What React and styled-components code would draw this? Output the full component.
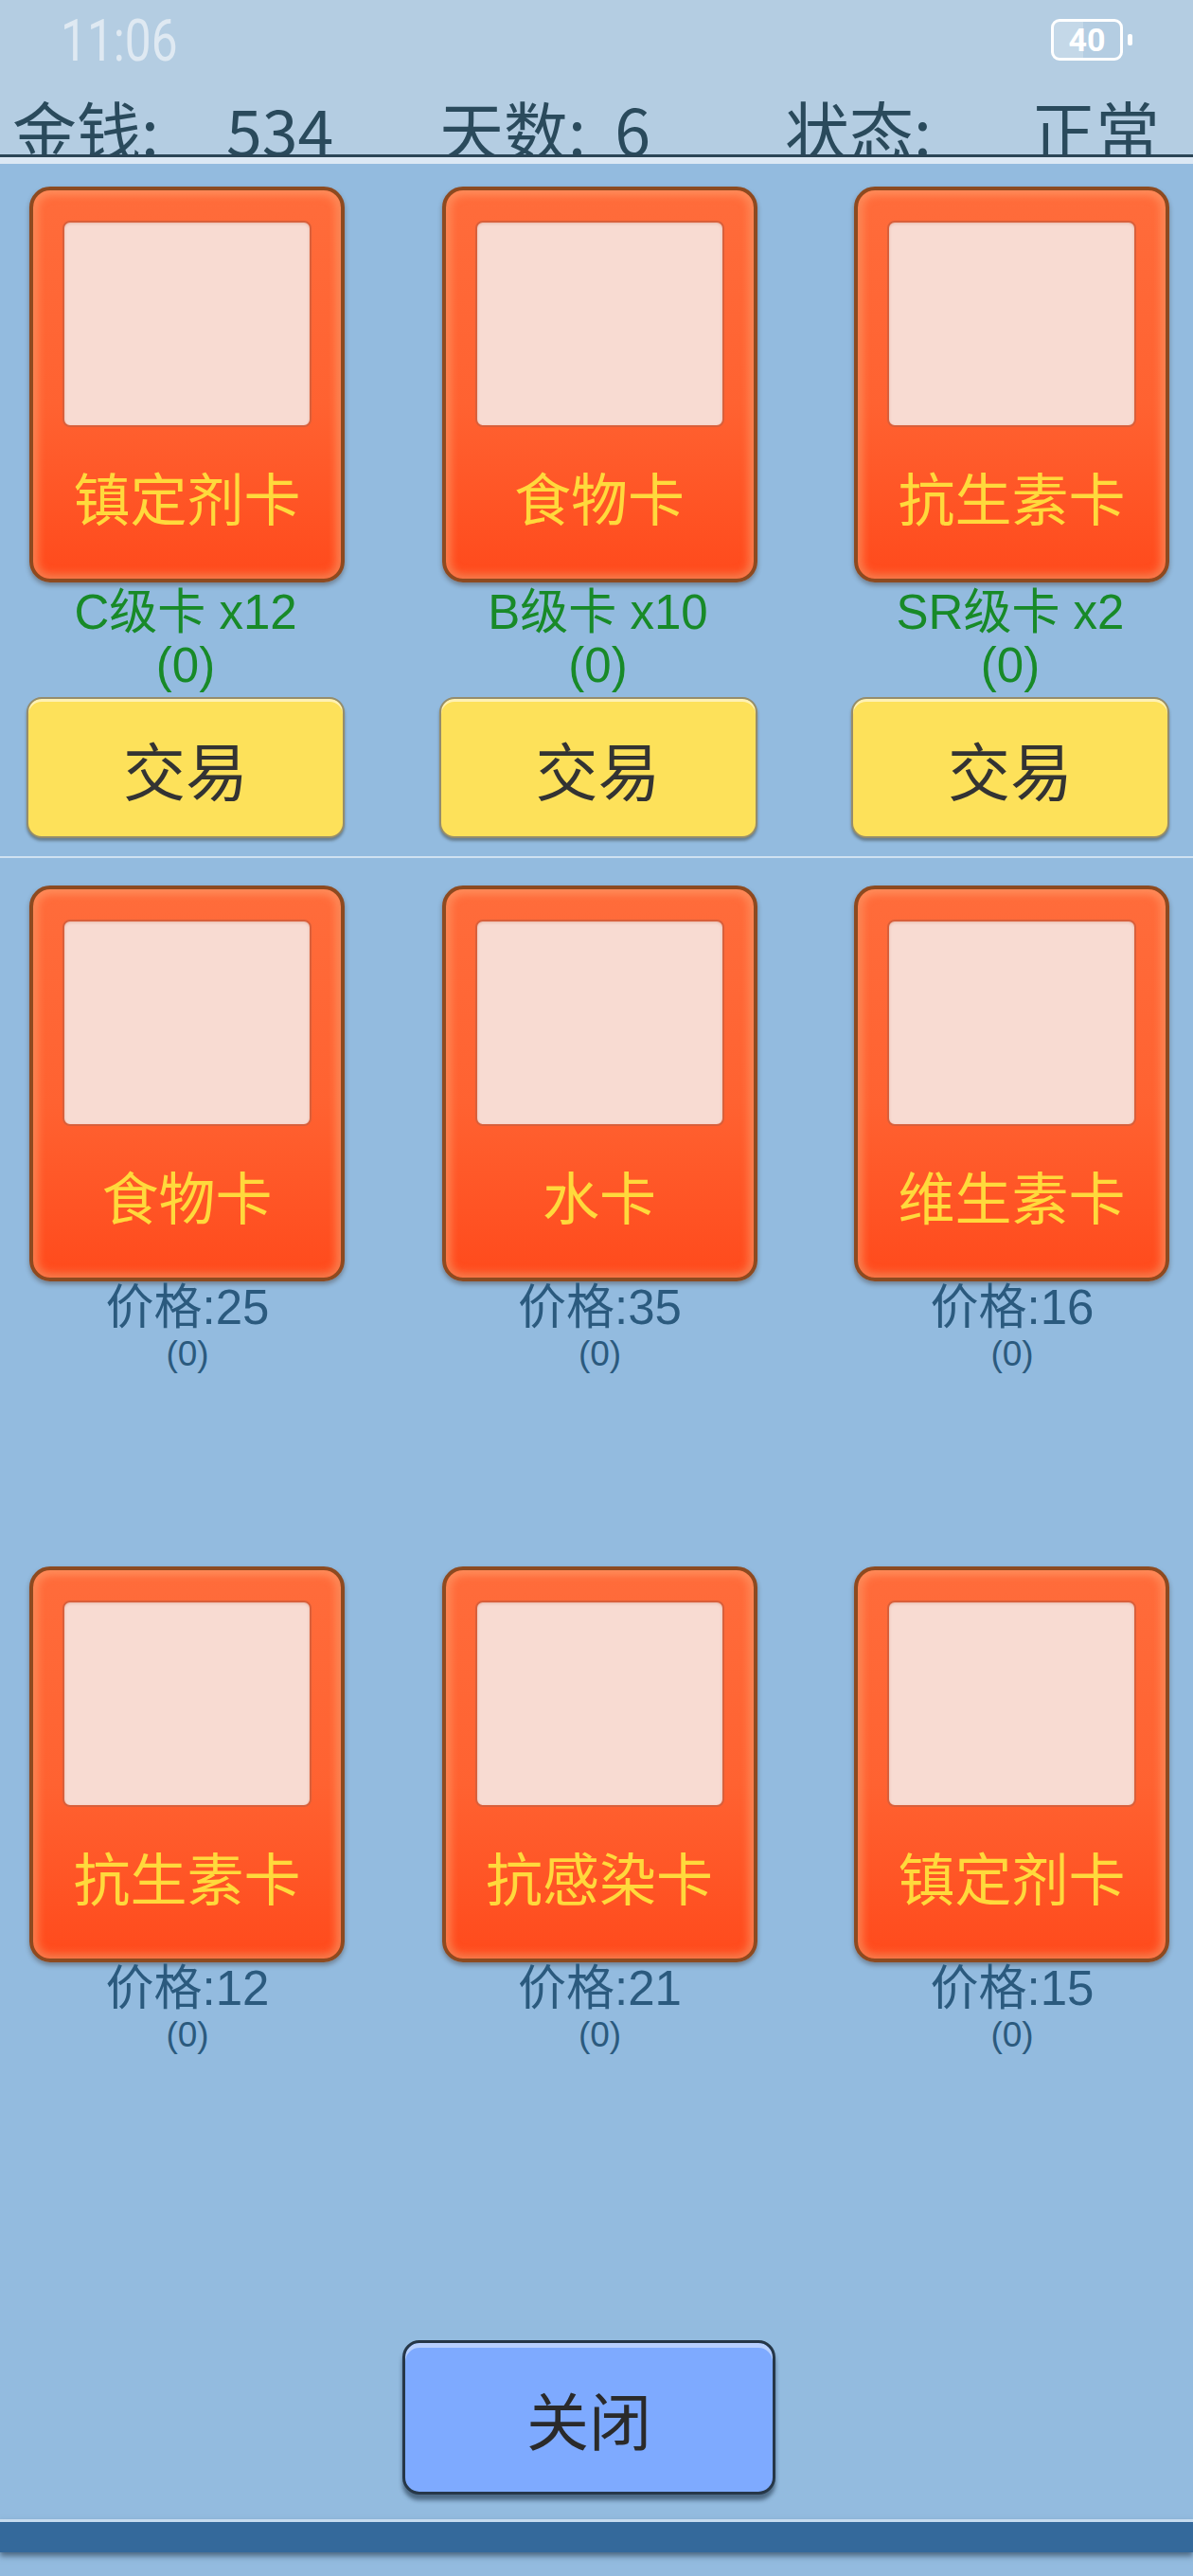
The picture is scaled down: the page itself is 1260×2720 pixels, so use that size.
import React from 'react'
import styled, { createGlobalStyle } from 'styled-components'

const GlobalStyle = createGlobalStyle`
  html, body {
    margin: 0;
    padding: 0;
    background: #e9f0f6;
  }
  body {
    font-family: "Liberation Sans", "Noto Sans CJK SC", sans-serif;
  }
`;

const tradeCards = [
    { name: '镇定剂卡', grade: 'C级卡 x12', owned: 0 },
    { name: '食物卡', grade: 'B级卡 x10', owned: 0 },
    { name: '抗生素卡', grade: 'SR级卡 x2', owned: 0 },
];

const shopCards = [
    { name: '食物卡', price: 25, owned: 0 },
    { name: '水卡', price: 35, owned: 0 },
    { name: '维生素卡', price: 16, owned: 0 },
    { name: '抗生素卡', price: 12, owned: 0 },
    { name: '抗感染卡', price: 21, owned: 0 },
    { name: '镇定剂卡', price: 15, owned: 0 },
];

function Card({ name }) {
    return (
        <CardFrame>
            <CardPicture />
            <CardName>{name}</CardName>
        </CardFrame>
    );
}

function App() {
    return (
        <Page>
            <GlobalStyle />
            <Top>
                <StatusBar>
                    <Clock>11:06</Clock>
                    <BatteryWrap>
                        <Battery>40</Battery>
                        <BatteryNub />
                    </BatteryWrap>
                </StatusBar>
                <Stats>
                    <span>金钱:</span>
                    <span>534</span>
                    <span>天数:  6</span>
                    <span>状态:</span>
                    <span>正常</span>
                </Stats>
            </Top>

            <TradeGrid>
                {tradeCards.map((card) => (
                    <Column key={card.name}>
                        <Card name={card.name} />
                        <Grade>
                            {card.grade}
                            <br />
                            ({card.owned})
                        </Grade>
                        <TradeButton>交易</TradeButton>
                    </Column>
                ))}
            </TradeGrid>

            <Divider />

            <ShopGrid>
                {shopCards.map((card, i) => (
                    <Column key={i}>
                        <Card name={card.name} />
                        <Price>价格:{card.price}</Price>
                        <Owned>({card.owned})</Owned>
                    </Column>
                ))}
            </ShopGrid>

            <CloseButton>关闭</CloseButton>
            <BottomBar />
        </Page>
    );
}

const Page = styled.div`
    width: 1260px;
    height: 2720px;
    background: #93bbdf;
    display: flex;
    flex-direction: column;
    overflow: hidden;
`;

const Top = styled.div`
    background: #b4cde2;
    border-bottom: 7px solid #dce8f4;
`;

const StatusBar = styled.div`
    height: 90px;
    display: flex;
    align-items: flex-start;
    justify-content: space-between;
    padding: 0 64px 0 64px;
`;

const Clock = styled.div`
    font-family: Roboto, "Liberation Sans", sans-serif;
    font-size: 62px;
    line-height: 86px;
    color: #dfe9f2;
    transform: scaleX(0.8);
    transform-origin: left center;
`;

const BatteryWrap = styled.div`
    display: flex;
    align-items: center;
    gap: 5px;
    margin-top: 20px;
`;

const Battery = styled.div`
    width: 70px;
    height: 38px;
    border: 3px solid #fff;
    border-radius: 9px;
    background: linear-gradient(to right, rgba(255, 255, 255, 0.22) 45%, transparent 45%);
    color: #fff;
    font-family: Roboto, "Liberation Sans", sans-serif;
    font-weight: 700;
    font-size: 34px;
    line-height: 38px;
    text-align: center;
`;

const BatteryNub = styled.div`
    width: 5px;
    height: 12px;
    border-radius: 2px;
    background: #fff;
`;

const Stats = styled.div`
    height: 73px;
    overflow: hidden;
    display: grid;
    grid-template-columns: 226px 225px 365px 260px auto;
    padding-left: 13px;
    border-bottom: 3px solid #2b4556;
    font-family: "Noto Sans CJK SC", sans-serif;
    font-size: 68px;
    line-height: 68px;
    color: #2a4a5c;
    white-space: pre;

    span {
        padding-top: 12px;
    }
`;

const TradeGrid = styled.div`
    display: grid;
    grid-template-columns: repeat(3, 336px);
    column-gap: 99.5px;
    padding: 24px 0 0 28px;
`;

const ShopGrid = styled(TradeGrid)`
    padding-top: 29px;
    grid-auto-rows: 719px;
`;

const Column = styled.div`
    display: flex;
    flex-direction: column;
    align-items: stretch;
`;

const CardFrame = styled.div`
    box-sizing: border-box;
    width: 333px;
    height: 418px;
    margin-left: 3px;
    padding: 32px 31px 0;
    border: 4px solid #8d4a20;
    border-radius: 22px;
    background: linear-gradient(#ff6c3b, #ff6231 55%, #ff4a1c);
    box-shadow:
        inset 0 0 8px 5px rgba(255, 165, 115, 0.6),
        inset 0 -4px 6px rgba(200, 50, 10, 0.35),
        0 3px 5px rgba(60, 40, 30, 0.4);
    display: flex;
    flex-direction: column;
`;

const CardPicture = styled.div`
    height: 218px;
    border: 2px solid #d95f3a;
    border-radius: 8px;
    background: #f8dbd2;
    box-sizing: border-box;
    box-shadow: inset 0 1px 3px rgba(180, 80, 50, 0.25);
`;

const CardName = styled.div`
    flex: 1;
    display: flex;
    align-items: center;
    justify-content: center;
    padding-bottom: 16px;
    font-family: "Noto Sans CJK SC", sans-serif;
    font-size: 60px;
    color: #ffd93c;
    white-space: nowrap;
`;

const Grade = styled.div`
    margin-top: 4px;
    font-size: 51px;
    line-height: 56px;
    color: #188a28;
    text-align: center;
`;

const TradeButton = styled.button`
    margin-top: 5px;
    height: 149px;
    border: 2px solid #958d6c;
    border-radius: 16px;
    background: #fde15a;
    box-shadow:
        inset 0 3px 0 rgba(255, 255, 255, 0.55),
        0 3px 3px rgba(40, 40, 30, 0.4);
    font-family: "Noto Sans CJK SC", sans-serif;
    font-size: 66px;
    color: #333;
    padding: 0;
`;

const Divider = styled.div`
    height: 2px;
    margin-top: 19px;
    background: #cfe1f1;
`;

const Price = styled.div`
    font-size: 51px;
    line-height: 56px;
    color: #2b5a7e;
    text-align: center;
    padding-left: 4px;
`;

const Owned = styled.div`
    font-size: 37px;
    line-height: 42px;
    color: #2b5a7e;
    text-align: center;
    padding-left: 4px;
`;

const CloseButton = styled.button`
    align-self: flex-start;
    margin: 98px 0 0 425px;
    width: 394px;
    height: 163px;
    border: 3px solid #263748;
    border-radius: 18px;
    background: #7eaaff;
    box-shadow:
        inset 0 5px 0 rgba(255, 255, 255, 0.45),
        0 6px 4px rgba(20, 40, 60, 0.55);
    font-family: "Noto Sans CJK SC", sans-serif;
    font-size: 66px;
    color: #2a2a2a;
    padding: 0;
`;

const BottomBar = styled.div`
    margin-top: 26px;
    height: 32px;
    background: #34699b;
    border-top: 3px solid #c5dbef;
    box-shadow: 0 4px 6px rgba(30, 50, 70, 0.6);
`;

export default App;
